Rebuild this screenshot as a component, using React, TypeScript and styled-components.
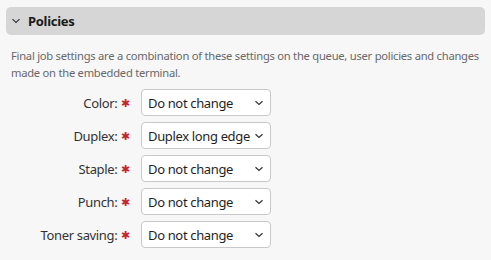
import styled, { createGlobalStyle } from "styled-components";

const GlobalStyle = createGlobalStyle`
  html, body {
    margin: 0;
    padding: 0;
    background: #f7f7f7;
  }
  body {
    font-family: "Noto Sans", "Open Sans", sans-serif;
    color: #333333;
  }
`;

const Panel = styled.section`
  padding: 7px 6px 10px 6px;
`;

const Header = styled.div`
  display: flex;
  align-items: center;
  gap: 7px;
  height: 28px;
  padding-left: 5px;
  background: #d6d6d6;
  border-radius: 5px;
  font-size: 13px;
  font-weight: 700;
  letter-spacing: -0.3px;
  color: #1a1a1a;
`;

const Body = styled.div`
  padding: 12px 4px 0 5px;
`;

const Description = styled.p`
  margin: 0 0 8px 0;
  font-size: 11.2px;
  line-height: 17px;
  letter-spacing: -0.25px;
  white-space: nowrap;
  color: #686868;
`;

const Form = styled.div`
  display: grid;
  grid-template-columns: 119px 130px;
  column-gap: 11px;
  row-gap: 6px;
  align-items: center;
`;

const Label = styled.label`
  justify-self: end;
  display: flex;
  align-items: center;
  gap: 4px;
  font-size: 13px;
  letter-spacing: -0.35px;
  color: #333333;
`;

const Required = styled.span`
  color: #c4262e;
  font-size: 11px;
  line-height: 1;
`;

const SelectWrap = styled.div`
  position: relative;
  height: 27px;
`;

const Select = styled.select`
  appearance: none;
  width: 100%;
  height: 27px;
  box-sizing: border-box;
  padding: 0 14px 0 6px;
  border: 1px solid #c9c9c9;
  border-radius: 4px;
  background: #ffffff;
  font-family: inherit;
  font-size: 13px;
  letter-spacing: -0.35px;
  color: #1f1f1f;
`;

const Caret = styled.svg`
  position: absolute;
  right: 7px;
  top: 11px;
  pointer-events: none;
`;

type Field = { label: string; value: string; options: string[] };

const fields: Field[] = [
  { label: "Color:", value: "Do not change", options: ["Do not change", "Color", "Grayscale"] },
  { label: "Duplex:", value: "Duplex long edge", options: ["Do not change", "Simplex", "Duplex long edge", "Duplex short edge"] },
  { label: "Staple:", value: "Do not change", options: ["Do not change", "None", "Top left"] },
  { label: "Punch:", value: "Do not change", options: ["Do not change", "None", "2 holes"] },
  { label: "Toner saving:", value: "Do not change", options: ["Do not change", "On", "Off"] },
];

function Chevron() {
  return (
    <svg width="10" height="6" viewBox="0 0 10 6" fill="none">
      <path d="M1.5 1.2l3.5 3.3 3.5-3.3" stroke="#333" strokeWidth="1.1" />
    </svg>
  );
}

function App() {
  return (
    <>
      <GlobalStyle />
      <Panel>
        <Header>
          <Chevron />
          Policies
        </Header>
        <Body>
          <Description>
            Final job settings are a combination of these settings on the queue, user policies and changes
            <br />
            made on the embedded terminal.
          </Description>
          <Form>
            {fields.map((f) => (
              <>
                <Label key={f.label + "-l"}>
                  {f.label} <Required>✱</Required>
                </Label>
                <SelectWrap key={f.label + "-s"}>
                  <Select defaultValue={f.value}>
                    {f.options.map((o) => (
                      <option key={o}>{o}</option>
                    ))}
                  </Select>
                  <Caret width="10" height="6" viewBox="0 0 10 6" fill="none">
                    <path d="M1.5 1.2l3.5 3.3 3.5-3.3" stroke="#333" strokeWidth="1.2" />
                  </Caret>
                </SelectWrap>
              </>
            ))}
          </Form>
        </Body>
      </Panel>
    </>
  );
}

export default App;
